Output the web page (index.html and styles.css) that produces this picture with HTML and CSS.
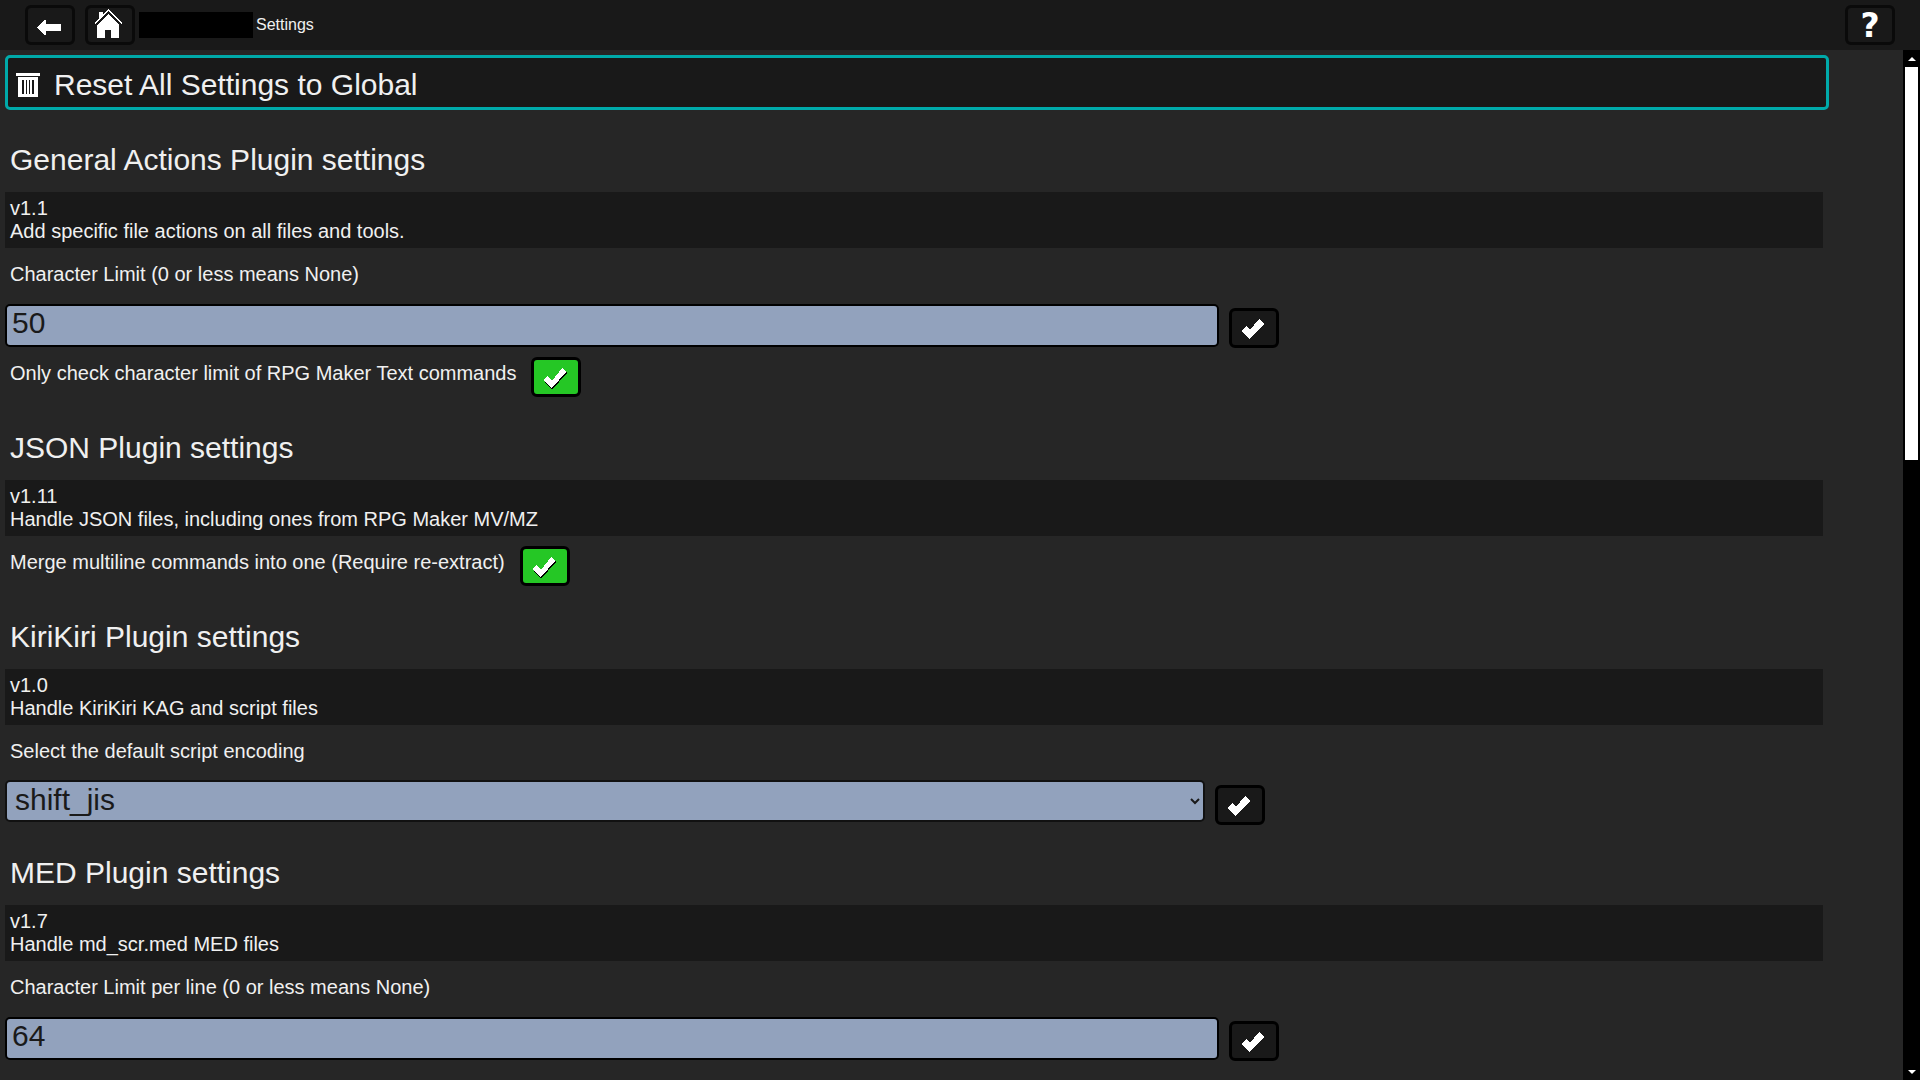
FILE: index.html
```html
<!DOCTYPE html>
<html lang="en">
<head>
<meta charset="utf-8">
<title>Settings</title>
<link rel="stylesheet" href="styles.css">
</head>
<body>
<header class="topbar">
  <button class="btn nav-btn back-btn" aria-label="Back"><svg class="icon" viewBox="0 0 24 15" width="24" height="15"><path d="M0 7.5 8 0h1v4h15v7H9v4H8z"/></svg></button>
  <button class="btn nav-btn home-btn" aria-label="Home"><svg class="icon" viewBox="0 0 28 29" width="28" height="29"><path d="M14 0 9 5V3H5v6l-5 5 1 1L14 2l13 13 1-1z"/><path d="M14 5 3 16v13h8v-8h6v8h8V16z"/></svg></button>
  <div class="crumbs"><span class="crumb-box"></span><span class="crumb-text">Settings</span></div>
  <button class="btn nav-btn help-btn" aria-label="Help">?</button>
</header>
<div class="body-row">
  <main class="content">
    <button class="reset"><svg class="icon trash" viewBox="0 0 24 24" width="24" height="24"><path d="M0 0h24v3H0zM2 4h20v20H2z"/><path fill="#181818" d="M6 7h2v14H6zM10 7h1v14h-1zM13 7h1v14h-1zM16 7h2v14h-2z"/></svg><span>Reset All Settings to Global</span></button>

    <h2 class="plugin-title">General Actions Plugin settings</h2>
    <div class="plugin-desc">v1.1<br>Add specific file actions on all files and tools.</div>
    <p class="label">Character Limit (0 or less means None)</p>
    <div class="field-row">
      <input class="text-input" type="text" value="50">
      <button class="btn confirm"><svg class="icon" viewBox="0 0 23 20" width="23" height="20"><path d="M0 12 5 7l4 4L18 0l5 5L9 20z"/></svg></button>
    </div>
    <div class="check-row">
      <span class="check-label">Only check character limit of RPG Maker Text commands</span>
      <button class="btn toggle-on"><svg class="icon" viewBox="0 0 24 22" width="24" height="22"><path fill="#000" d="M2 14l2-2 5 5L21 2l3 3L9 22z"/><path d="M0 12 4 8l5 5L19 0l4 4L9 20z"/></svg></button>
    </div>

    <h2 class="plugin-title">JSON Plugin settings</h2>
    <div class="plugin-desc">v1.11<br>Handle JSON files, including ones from RPG Maker MV/MZ</div>
    <div class="check-row first">
      <span class="check-label">Merge multiline commands into one (Require re-extract)</span>
      <button class="btn toggle-on"><svg class="icon" viewBox="0 0 24 22" width="24" height="22"><path fill="#000" d="M2 14l2-2 5 5L21 2l3 3L9 22z"/><path d="M0 12 4 8l5 5L19 0l4 4L9 20z"/></svg></button>
    </div>

    <h2 class="plugin-title">KiriKiri Plugin settings</h2>
    <div class="plugin-desc">v1.0<br>Handle KiriKiri KAG and script files</div>
    <p class="label">Select the default script encoding</p>
    <div class="field-row select-row">
      <select class="select-input"><option>shift_jis</option></select>
      <button class="btn confirm"><svg class="icon" viewBox="0 0 23 20" width="23" height="20"><path d="M0 12 5 7l4 4L18 0l5 5L9 20z"/></svg></button>
    </div>

    <h2 class="plugin-title">MED Plugin settings</h2>
    <div class="plugin-desc">v1.7<br>Handle md_scr.med MED files</div>
    <p class="label">Character Limit per line (0 or less means None)</p>
    <div class="field-row">
      <input class="text-input" type="text" value="64">
      <button class="btn confirm"><svg class="icon" viewBox="0 0 23 20" width="23" height="20"><path d="M0 12 5 7l4 4L18 0l5 5L9 20z"/></svg></button>
    </div>
  </main>
  <div class="scrollbar" aria-hidden="true">
    <span class="arrow up"></span>
    <div class="track"><div class="thumb"></div></div>
    <span class="arrow down"></span>
  </div>
</div>
</body>
</html>
```
FILE: styles.css
```css
* { box-sizing: border-box; }
html, body { height: 100%; }
body {
  margin: 0;
  height: 1080px;
  overflow: hidden;
  background: #262626;
  color: #f0f0f0;
  font: 20px/23px "Liberation Sans", Arial, sans-serif;
  display: flex;
  flex-direction: column;
}
.topbar {
  height: 50px;
  flex: none;
  background: #191919;
  display: flex;
  align-items: center;
  padding: 0 25px;
  gap: 10px;
}
.btn {
  display: inline-flex;
  align-items: center;
  justify-content: center;
  width: 50px;
  height: 40px;
  flex: none;
  padding: 0;
  background: #191919;
  border: 3px solid #000;
  border-radius: 6px;
  color: #fff;
}
.nav-btn { border-color: #0a0a0a; }
.back-btn { padding: 4px 2px 0 0; }
.home-btn { padding: 0 4px 3px 0; }
.icon { fill: #fff; display: block; shape-rendering: crispEdges; }
.help-btn {
  font: bold 33px "DejaVu Sans", sans-serif;
  margin-left: auto;
  padding: 1px 0 0 0;
}
.crumbs { display: flex; align-items: center; gap: 3px; margin-left: -6px; }
.crumb-box { width: 114px; height: 26px; background: #000; }
.crumb-text { font-size: 16px; position: relative; top: -1px; }
.body-row { flex: 1; display: flex; min-height: 0; }
.content { flex: 1; min-width: 0; overflow: hidden; padding: 5px 0 0 5px; }
.reset {
  display: flex;
  align-items: center;
  gap: 14px;
  width: 1824px;
  height: 55px;
  padding: 4px 0 0 8px;
  background: #191919;
  border: 3px solid #0aa;
  border-radius: 5px;
  color: #f0f0f0;
  font: 30px "Liberation Sans", Arial, sans-serif;
}
.plugin-title {
  margin: 0;
  padding: 33px 5px 15px;
  font: 400 30px/34px "Liberation Sans", Arial, sans-serif;
}
.plugin-desc {
  width: 1818px;
  height: 56px;
  padding: 5px;
  background: #191919;
}
.label { margin: 0; padding: 15px 5px 18px; }
.field-row { display: flex; align-items: flex-start; }
.select-row { height: 43px; margin-top: -1px; }
.text-input, .select-input {
  background: #92a2bd;
  border-radius: 5px;
  color: #1a1a1a;
  font: 30px "Liberation Sans", Arial, sans-serif;
  outline: none;
}
.text-input {
  width: 1214px;
  height: 43px;
  padding: 0 0 6px 5px;
  border: 2px solid #000;
}
.select-input {
  width: 1200px;
  height: 42px;
  padding: 0 0 4px 4px;
  border: 2px solid #111;
}
.confirm { margin: 4px 0 0 10px; padding: 2px 4px 0 0; }
.select-row .confirm { margin-top: 5px; }
.check-row { display: flex; align-items: flex-start; padding: 9px 0 0 5px; height: 50px; }
.check-row.first { height: 51px; padding-top: 10px; }
.check-label { padding-top: 5px; margin-right: 15px; }
.toggle-on { background: #25c725; padding: 3px 2px 0 0; }
.scrollbar {
  width: 17px;
  flex: none;
  background: #000;
  display: flex;
  flex-direction: column;
  align-items: center;
}
.arrow { flex: none; height: 17px; display: flex; align-items: center; justify-content: center; }
.arrow::before { content: ""; border: 4px solid transparent; }
.arrow.up::before { border-bottom: 4px solid #fff; border-top: 0; }
.arrow.down::before { border-top: 4px solid #fff; border-bottom: 0; }
.track { flex: 1; width: 100%; }
.thumb { width: 13px; height: 393px; margin: 0 auto; background: #fff; }
```
